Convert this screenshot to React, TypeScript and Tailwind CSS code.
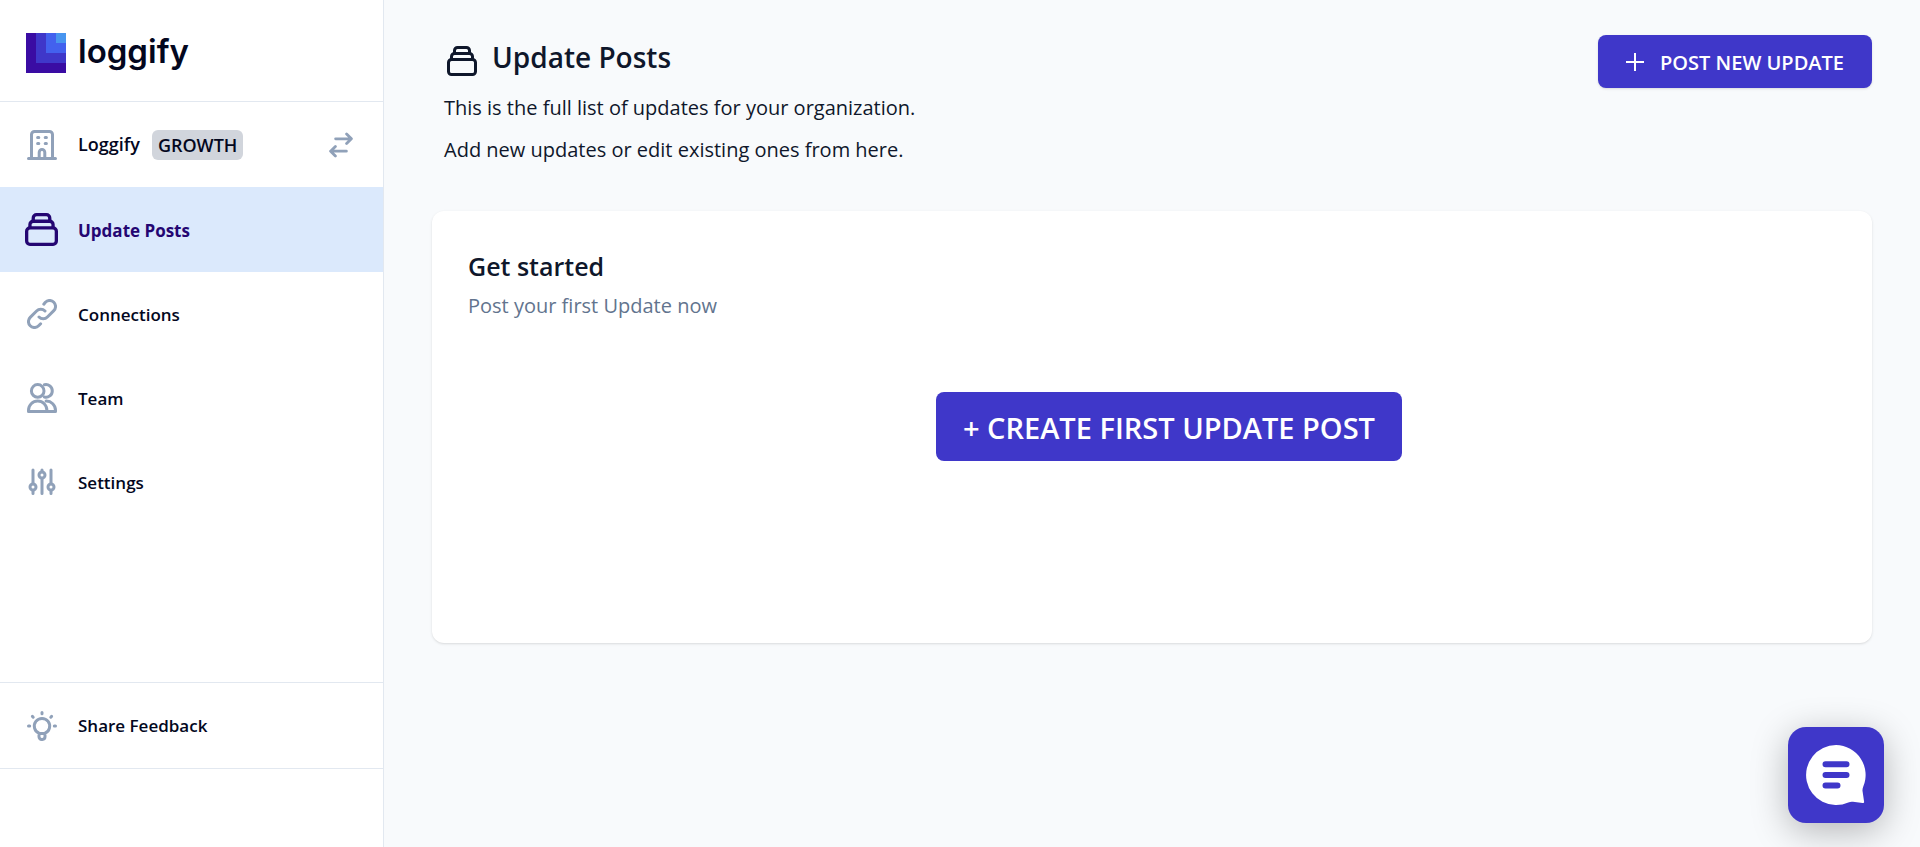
import type { ReactNode } from "react";

type IconProps = { className?: string };

function Icon({ className = "size-[30px]", children }: IconProps & { children: ReactNode }) {
  return (
    <svg
      viewBox="0 0 30 30"
      fill="none"
      stroke="currentColor"
      strokeWidth={3}
      strokeLinecap="round"
      strokeLinejoin="round"
      aria-hidden="true"
      className={"shrink-0 " + className}
    >
      {children}
    </svg>
  );
}

function BuildingIcon() {
  return (
    <Icon>
      <path d="M1.5 28.5h27M4.5 28.4V4.5a3 3 0 0 1 3-3h15a3 3 0 0 1 3 3v23.9M12.2 28.4v-6a2.8 2.8 0 0 1 5.6 0v6" />
      <path d="M10.6 7.5h1.2M18.2 7.5h1.2M10.6 13.5h1.2M18.2 13.5h1.2" />
    </Icon>
  );
}

function StackIcon({ className }: IconProps) {
  return (
    <Icon className={className}>
      <rect x="1.5" y="13.5" width="27" height="15" rx="3" />
      <path d="M4.5 13.2v-2.7a3 3 0 0 1 3-3h15a3 3 0 0 1 3 3v2.7" />
      <path d="M7.5 7.2V4.5a3 3 0 0 1 3-3h9a3 3 0 0 1 3 3v2.7" />
    </Icon>
  );
}

function LinkIcon() {
  return (
    <Icon>
      <path d="M12 18a5.9 5.9 0 0 0 8.4 0l6.4-6.4a5.9 5.9 0 0 0-8.4-8.4l-1.6 2" />
      <path d="M18 12a5.9 5.9 0 0 0-8.4 0l-6.4 6.4a5.9 5.9 0 0 0 8.4 8.4l2-2" />
    </Icon>
  );
}

function TeamIcon() {
  return (
    <Icon>
      <circle cx="10.7" cy="7.9" r="6.3" />
      <path d="M17.4 1.8a6.3 6.3 0 1 1 0 12.2" />
      <path d="M1.5 28.5v-1.2a9.2 9.2 0 0 1 18.4 0v1.2zM19.9 28.5h8.6v-1.2a9.2 9.2 0 0 0-9.4-9.2" />
    </Icon>
  );
}

function SlidersIcon() {
  return (
    <Icon>
      <path d="M6 3v13.4M6 23.4V26.5M15 3v1.4M15 11.4V26.5M24 3v13.4M24 23.4V26.5" />
      <circle cx="6" cy="20" r="3" />
      <circle cx="15" cy="8" r="3" />
      <circle cx="24" cy="20" r="3" />
    </Icon>
  );
}

function BulbIcon() {
  return (
    <Icon>
      <path d="M12 22.2a7.7 7.7 0 1 1 6 0v3.6a2.6 2.6 0 0 1-2.6 2.6h-.8a2.6 2.6 0 0 1-2.6-2.6zM12 22.5h6" />
      <path d="M15 1.5v1.2M1.5 15h1.2M27.3 15h1.2M5.4 5.4l.8.8M24.6 5.4l-.8.8" />
    </Icon>
  );
}

function SwapIcon() {
  return (
    <svg
      viewBox="0 0 24 26"
      fill="none"
      stroke="currentColor"
      strokeWidth={2.8}
      strokeLinecap="round"
      strokeLinejoin="round"
      aria-hidden="true"
      className="h-[26px] w-6"
    >
      <path d="M6.6 6.8h15.8M17.6 2l4.8 4.8-4.8 4.8M17.4 19.2H1.6M6.4 14.4l-4.8 4.8L6.4 24" />
    </svg>
  );
}

const navItems = [
  { label: "Connections", icon: <LinkIcon /> },
  { label: "Team", icon: <TeamIcon /> },
  { label: "Settings", icon: <SlidersIcon /> },
];

export default function App() {
  return (
    <div className="flex min-h-screen bg-slate-50 font-['Open_Sans',sans-serif] text-slate-900">
      <aside className="flex w-96 shrink-0 flex-col border-r border-slate-200 bg-white text-[17px] font-semibold text-[#03071e]">
        <header className="border-b border-slate-200 px-[26px] pt-[33px] pb-7">
          <a href="#" aria-label="loggify" className="flex h-10 gap-3">
            <svg viewBox="0 0 40 40" aria-hidden="true" className="size-10">
              <path fill="#3a0ca3" d="M0 0h40v40H0z" />
              <path fill="#3f37c9" d="M10 0h30v30H10z" />
              <path fill="#4361ee" d="M20 0h20v20H20z" />
              <path fill="#4895ef" d="M30 0h10v10H30z" />
            </svg>
            <span className="font-['Inter',sans-serif] text-[33px] leading-9 font-semibold">loggify</span>
          </a>
        </header>
        <div className="flex h-[85px] items-center pr-[30px] pl-[27px] text-[18px]">
          <span className="text-slate-400"><BuildingIcon /></span>
          <span className="ml-[21px]">Loggify</span>
          <span className="ml-3 rounded-md bg-gray-300 px-1.5 leading-[30px]">GROWTH</span>
          <button type="button" aria-label="Switch organization" className="ml-auto text-slate-400">
            <SwapIcon />
          </button>
        </div>
        <nav className="flex flex-1 flex-col">
          <a href="#" className="flex h-[85px] items-center gap-5 bg-[#dbe9fc] px-[25px] font-bold text-[#240672]">
            <StackIcon className="size-[33px]" />
            <span className="pt-0.5">Update Posts</span>
          </a>
          {navItems.map((item) => (
            <a key={item.label} href="#" className="flex h-[84px] items-center gap-[21px] px-[27px]">
              <span className="text-slate-400">{item.icon}</span>
              <span className="pt-0.5">{item.label}</span>
            </a>
          ))}
        </nav>
        <div className="mb-[78px] border-y border-slate-200">
          <a href="#" className="flex h-[85px] items-center gap-[21px] px-[27px]">
            <span className="text-slate-400"><BulbIcon /></span>
            <span>Share Feedback</span>
          </a>
        </div>
      </aside>

      <main className="min-w-0 flex-1 px-12 pt-[35px]">
        <header className="flex items-start justify-between">
          <div className="px-3">
            <h1 className="flex items-end gap-[15px] px-[3px] text-[28px] leading-[44px] font-semibold">
              <StackIcon className="mb-[3px] size-[30px]" />
              Update Posts
            </h1>
            <p className="mt-2 text-[20px] leading-[42px]">
              This is the full list of updates for your organization.
              <br />
              Add new updates or edit existing ones from here.
            </p>
          </div>
          <button
            type="button"
            className="flex h-[53px] items-center gap-4 rounded-lg bg-[#3f37c9] px-7 text-[20px] font-semibold text-white shadow-sm"
          >
            <svg viewBox="0 0 18 18" stroke="currentColor" strokeWidth={2} aria-hidden="true" className="size-[18px]">
              <path d="M9 0v18M0 9h18" />
            </svg>
            <span className="pt-0.5">POST NEW UPDATE</span>
          </button>
        </header>

        <section className="mt-10 h-[432px] rounded-xl bg-white px-9 pt-[35px] shadow">
          <h2 className="text-[25px] leading-10 font-semibold">Get started</h2>
          <p className="text-[20px] leading-10 text-slate-500">Post your first Update now</p>
          <div className="mt-[66px] flex justify-center pl-[34px]">
            <button
              type="button"
              className="h-[69px] rounded-lg bg-[#3f37c9] px-[27px] pt-0.5 text-[29px] font-semibold text-white"
            >
              + CREATE FIRST UPDATE POST
            </button>
          </div>
        </section>
      </main>

      <button
        type="button"
        aria-label="Open chat"
        className="fixed right-9 bottom-6 flex size-24 items-center justify-center rounded-[18px] bg-[#3f37c9] text-white shadow-[0_8px_36px_rgba(0,0,0,0.28)]"
      >
        <svg viewBox="0 0 60 60" aria-hidden="true" className="size-[60px]">
          <path
            fill="currentColor"
            d="M30 0a30 30 0 1 0 12.3 57.4c1.6-.7 3-.9 4.7-.7l9.6 1.4c1 .1 1.6-.3 1.5-1.3l-1.5-10.3c-.3-1.7 0-3 .6-4.7A30 30 0 0 0 30 0z"
          />
          <path stroke="#3f37c9" strokeWidth={6} strokeLinecap="round" d="M19.5 19.3h21M19.5 30h21M19.5 40.5h12" />
        </svg>
      </button>
    </div>
  );
}
